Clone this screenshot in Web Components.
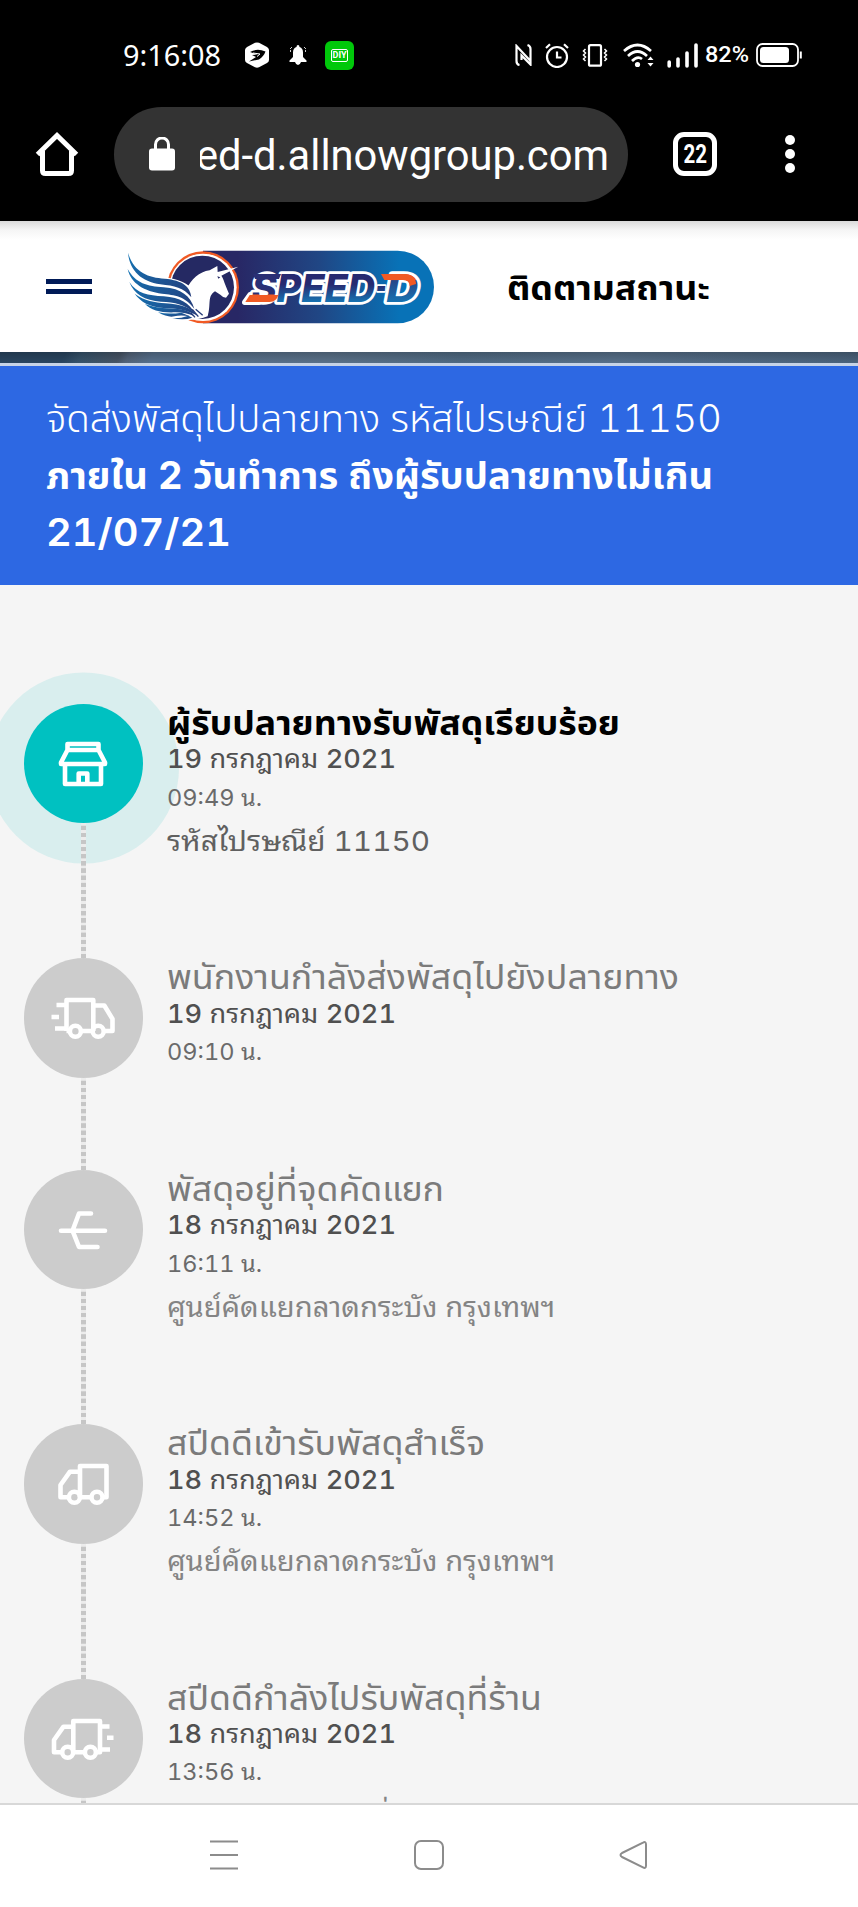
<!DOCTYPE html>
<html lang="th">
<head>
<meta charset="utf-8">
<title>Speed-D</title>
<style>
  html, body { margin: 0; height: 1907px; overflow: hidden; }
  body {
    font-family: Inter, "Noto Sans Thai", "Noto Sans", sans-serif;
    font-variant-numeric: tabular-nums;
    background: #f5f5f5;
  }
</style>
</head>
<body>
<tracking-page></tracking-page>

<script>
class BaseElement extends HTMLElement {
  constructor() {
    super();
    this.attachShadow({ mode: "open" });
  }

  connectedCallback() {
    this.shadowRoot.innerHTML = `<style>${this.constructor.css}</style>${this.render()}`;
    this.rendered?.();
  }
}

// One line of text, squeezed or stretched to a fixed measure
class FitLine extends BaseElement {
  render() {
    return `<span><slot></slot></span>`;
  }

  rendered() {
    const width = Number(this.getAttribute("width"));
    const span = this.shadowRoot.querySelector("span");
    const natural = span.getBoundingClientRect().width;
    if (width && natural) span.style.transform = `scaleX(${width / natural})`;
  }

  static css = `
    :host { display: block; white-space: nowrap; }
    span { display: inline-block; transform-origin: 0 50%; }
  `;
}
customElements.define("fit-line", FitLine);

const statusIcons = {
  app: [24, 26, `<path d="M10 .8Q12 0 14 .8L22 5Q24 6.500 24 8V18Q24 20 22 21L14 25.300Q12 26 10 25.300L2 21Q0 20 0 18V8Q0 6.500 2 5Z" fill="#fff"/><path d="M5 10Q12 6 20.500 9.500Q19 14 14 17.500L4 19.500L11 15L7 13L12.500 12.500Z" fill="#000"/><path d="M8 11L15 12L12 14.500" stroke="#fff" fill="none"/>`],
  bell: [18, 20, `<path d="M9 0Q10.500 0 10.500 2Q14 3 14 7.500V12L17.500 15.500V17H.5V15.500L4 12V7.500Q4 3 7.500 2Q7.500 0 9 0ZM6 17H12Q11 20 9 20T6 17Z" fill="#fff"/><path d="M1 4L3 2M17 4L15 2M1.500 7V5M16.500 7V5" stroke="#ccc"/>`],
  nfc: [17, 22, `<path d="M4.500 21Q1.500 20.500 1.500 17V2L15.500 17M12.500 1Q15.500 2 15.500 5V20.500L6.500 11.500V16" fill="none" stroke="#fff" stroke-width="2.200"/>`],
  alarm: [24, 25, `<circle cx="12" cy="14" r="10" fill="none" stroke="#fff" stroke-width="2.200"/><path d="M12 8.500V14.500H16.500M1 5L5 1.200M23 5L19 1.200" fill="none" stroke="#fff" stroke-width="2.200"/>`],
  vibrate: [26, 23, `<rect x="7" y="1.200" width="12" height="20.500" rx="1.500" fill="none" stroke="#fff" stroke-width="2.200"/><path d="M3.500 5L1.500 7L3.500 9L1.500 11L3.500 13L1.500 15L3.500 17M22.500 5L24.500 7L22.500 9L24.500 11L22.500 13L24.500 15L22.500 17" fill="none" stroke="#fff" stroke-width="1.500"/>`],
  wifi: [32, 25, `<path d="M1 8Q14.500-4 28 8M5 13Q14.500 4 24 13M9 18Q14.500 12.500 19 16" fill="none" stroke="#fff" stroke-width="2.700"/><circle cx="14.500" cy="21.500" r="2.600" fill="#fff"/><path d="M24.500 17L27.500 13.500L30.500 17ZM24.500 20L27.500 23.500L30.500 20Z" fill="#fff"/>`],
  signal: [31, 25, `<path d="M2.200 23V19M11 23V16M20 23V10M29 23V2" stroke="#fff" stroke-width="3.600" stroke-linecap="round"/>`],
  battery: [46, 24, `<rect x="1" y="1" width="41" height="22" rx="5.500" fill="none" stroke="#fff" stroke-width="1.800"/><rect x="4" y="4" width="29" height="16" rx="3.500" fill="#fff"/><path d="M44.800 8.500V15.500" stroke="#fff" stroke-width="2"/>`],
};

class StatusIcon extends BaseElement {
  render() {
    const [w, h, body] = statusIcons[this.getAttribute("name")];
    return `<svg width="${w}" height="${h}" viewBox="0 0 ${w} ${h}">${body}</svg>`;
  }

  static css = `
    :host { display: block; }
    svg { display: block; }
  `;
}
customElements.define("status-icon", StatusIcon);

class StatusBar extends BaseElement {
  render() {
    return `
      <fit-line class="time" width="98">9:16:08</fit-line>
      <status-icon name="app" style="margin-left:23px"></status-icon>
      <status-icon name="bell" style="margin-left:20px"></status-icon>
      <div class="diy"><span>DIY</span></div>
      <status-icon name="nfc" style="margin-left:161px"></status-icon>
      <status-icon name="alarm" style="margin-left:13px"></status-icon>
      <status-icon name="vibrate" style="margin-left:13px"></status-icon>
      <status-icon name="wifi" style="margin-left:15px"></status-icon>
      <status-icon name="signal" style="margin-left:12px"></status-icon>
      <fit-line class="percent" width="44">82%</fit-line>
      <status-icon name="battery" style="margin-left:7px"></status-icon>
    `;
  }

  static css = `
    :host {
      display: flex;
      align-items: center;
      box-sizing: border-box;
      height: 106px;
      padding: 4px 0 0 123px;
      color: #fff;
    }
    .time { width: 99px; font: 29px/34px "Noto Sans"; }
    .percent { width: 44px; margin-left: 7px; font: 500 22px/24px Roboto; }
    .diy {
      display: flex;
      align-items: center;
      justify-content: center;
      width: 29px;
      height: 29px;
      margin-left: 18px;
      border-radius: 6px;
      background: #00c80a;
    }
    .diy span {
      border: 1px solid #fff;
      border-radius: 2px;
      padding: 0 1px;
      font: 700 9px/11px Roboto;
    }
  `;
}
customElements.define("status-bar", StatusBar);

class BrowserBar extends BaseElement {
  render() {
    return `
      <svg class="home" width="44" height="44" viewBox="0 0 44 44">
        <path d="M2.500 22.500L22 3.500L41.500 22.500M7.500 19V38.500Q7.500 41.500 10.500 41.500H33.500Q36.500 41.500 36.500 38.500V19" fill="none" stroke="#fff" stroke-width="5"/>
      </svg>
      <div class="address">
        <svg width="26" height="34" viewBox="0 0 26 34">
          <rect y="11.500" width="26" height="22" rx="3" fill="#fff"/>
          <path d="M6.500 12V7.500A6.500 6.500 0 0 1 19.500 7.500V12" fill="none" stroke="#fff" stroke-width="3"/>
        </svg>
        <div class="url"><fit-line width="413">ed-d.allnowgroup.com</fit-line></div>
      </div>
      <div class="tabs"><span>22</span></div>
      <div class="menu"><i></i><i></i><i></i></div>
    `;
  }

  static css = `
    :host {
      display: flex;
      align-items: center;
      box-sizing: border-box;
      height: 115px;
      padding: 0 0 19px 35px;
      color: #fff;
    }
    .address {
      display: flex;
      align-items: center;
      box-sizing: border-box;
      width: 514px;
      height: 95px;
      margin-left: 35px;
      padding-left: 35px;
      border-radius: 48px;
      background: #333;
    }
    .url {
      display: flex;
      justify-content: flex-end;
      width: 409px;
      margin-left: 25px;
      padding-top: 4px;
      overflow: hidden;
      font: 42px/56px Roboto;
    }
    .url fit-line { width: 413px; flex: none; }
    .tabs {
      display: flex;
      align-items: center;
      justify-content: center;
      box-sizing: border-box;
      width: 44px;
      height: 44px;
      margin-left: 45px;
      border: 5px solid #fff;
      border-radius: 11px;
      font: 700 25px/30px Roboto;
    }
    .tabs span { transform: translateY(1px) scaleX(.82); }
    .menu {
      display: grid;
      gap: 4.300px;
      margin-left: 68px;
    }
    .menu i { width: 10px; height: 10px; border-radius: 50%; background: #fff; }
  `;
}
customElements.define("browser-bar", BrowserBar);

class SpeedLogo extends BaseElement {
  render() {
    return `
      <svg width="312" height="80" viewBox="375 95 936 240">
        <defs>
          <linearGradient id="pill"><stop offset=".15" stop-color="#282765"/><stop offset=".5" stop-color="#204684"/><stop offset=".85" stop-color="#0872b7"/></linearGradient>
          <linearGradient id="word" gradientUnits="userSpaceOnUse" x1="0" y1="170" x2="0" y2="262"><stop offset=".4" stop-color="#272a70"/><stop offset="1" stop-color="#1676b4"/></linearGradient>
          <linearGradient id="first" gradientUnits="userSpaceOnUse" x1="0" y1="170" x2="0" y2="265"><stop offset=".7" stop-color="#2a3075"/><stop offset=".72" stop-color="#f15a24"/></linearGradient>
          <linearGradient id="last" gradientUnits="userSpaceOnUse" x1="0" y1="170" x2="0" y2="265"><stop offset=".25" stop-color="#f15a24"/><stop offset=".27" stop-color="#264789"/><stop offset="1" stop-color="#1676b4"/></linearGradient>
          <linearGradient id="wing" x2="1" y2="1"><stop stop-color="#1475b5"/><stop offset="1" stop-color="#243b79"/></linearGradient>
        </defs>
        <path d="M612 106H1196A109 109 0 0 1 1196 324H612Z" fill="url(#pill)"/>
        <circle cx="612" cy="216" r="108" fill="#f15a24"/>
        <circle cx="612" cy="216" r="101" fill="#fff"/>
        <circle cx="610" cy="216" r="95" fill="#252963"/>
        <path d="M573 310C588 274 573 247 560 226C578 190 600 170 632 165L655 152L656 170L718 154L667 181C674 191 677 206 690 235L681 247Q672 247 664 238L648 228C624 243 637 267 626 303Q596 316 573 310Z" fill="#fff"/>
        <path d="M655 183L664 186L658 190Z" fill="#252963"/>
        <path d="M385 108C382 240 430 292 545 316Q585 314 618 304C604 226 570 190 480 184Q420 160 385 108Z" fill="#fff"/>
        <g fill="url(#wing)">
          <path d="M387 112C405 172 448 187 497 190C552 195 574 214 577 246C553 216 527 212 484 207C427 199 391 165 387 112Z"/>
          <path d="M386 161C410 204 445 213 494 216C547 220 574 242 586 280C557 242 528 239 489 235C436 228 396 205 386 161Z"/>
          <path d="M391 200C414 235 447 240 494 243C545 247 570 263 588 295C559 267 528 260 486 259C437 256 405 236 391 200Z"/>
          <path d="M407 235C437 258 467 260 500 264C547 267 575 277 599 303C562 283 533 279 493 278C452 275 425 260 407 235Z"/>
          <path d="M438 266C476 281 506 277 544 282Q574 286 587 303Q560 291 530 291C488 293 457 286 438 266Z"/>
          <path d="M477 291Q510 298 547 292L573 303Q544 298 526 303T477 291Z"/>
          <path d="M516 308Q540 311 568 301L580 307Q555 316 516 308Z"/>
        </g>
        <path d="M580 282L598 304M575 292L588 306M590 282L611 300" stroke="#243b79" stroke-width="4"/>
        <path d="M737 261L753 238H800L780 261Z" fill="#f15a24" stroke="#fff" stroke-width="16" stroke-linejoin="round"/>
        <g font-family="Inter, sans-serif" font-weight="800" font-style="italic" font-size="116" stroke="#fff" stroke-width="17" stroke-linejoin="round" paint-order="stroke" fill="url(#word)">
          <text x="1162" y="259" textLength="96" lengthAdjust="spacingAndGlyphs" fill="url(#last)">D</text>
          <text x="758" y="259" textLength="370" lengthAdjust="spacingAndGlyphs"><tspan fill="url(#first)">S</tspan>PEED</text>
          <text x="1124" y="255" textLength="44" lengthAdjust="spacingAndGlyphs" stroke-width="10">-</text>
        </g>
        <path d="M739 260L752 239H838Q832 260 812 260Z" fill="#f15a24"/>
        <path d="M762 176H846L840 191H768Z" fill="#2a3075"/>
        <path d="M1146 176H1215Q1250 176 1251 206L1232 212Q1232 194 1212 194H1156Z" fill="#f15a24"/>
      </svg>
    `;
  }

  static css = `
    :host { display: block; }
    svg { display: block; }
  `;
}
customElements.define("speed-logo", SpeedLogo);

class SiteHeader extends BaseElement {
  render() {
    return `
      <div class="burger"><i></i><i></i></div>
      <speed-logo></speed-logo>
      <fit-line width="203"><slot></slot></fit-line>
    `;
  }

  static css = `
    :host {
      display: flex;
      align-items: center;
      height: 131px;
      padding-left: 46px;
      background: linear-gradient(#dadada, #f5f5f5 9px, #fff 19px);
    }
    .burger { display: grid; gap: 5px; width: 46px; }
    .burger i { height: 4.700px; background: #001a57; }
    speed-logo { margin-left: 32px; }
    fit-line {
      margin: 2px 0 0 71px;
      color: #000;
      font-size: 33px;
      font-weight: 700;
      line-height: 44px;
    }
  `;
}
customElements.define("site-header", SiteHeader);

class DeliveryNotice extends BaseElement {
  render() {
    return `<div class="photo"></div><div class="text"><slot></slot></div>`;
  }

  static css = `
    :host { display: block; }
    .photo {
      height: 11px;
      border-bottom: 3px solid #c6d3e6;
      background: linear-gradient(#0003, #0000), linear-gradient(115deg, #294560 0 60px, #36536b 75px, #475566 110px, #53647a 118px, #56708d 140px, #5a7189 300px, #506b83 420px, #57708a 560px, #4a637c 780px, #536c83);
    }
    .text {
      box-sizing: border-box;
      height: 219px;
      padding: 24px 46px 0;
      background: #2d68e3;
      color: #fff;
      font-size: 38px;
      line-height: 57px;
    }
  `;
}
customElements.define("delivery-notice", DeliveryNotice);

const wheels = (a, b) => `<circle cx="${a}" cy="13.300" r="5.500"/><circle cx="${b}" cy="13.300" r="5.500"/>`;
const stepIcons = {
  store: `<path d="M-15.500-14V-20H15.500V-14M-15.500-14H15.500L22-1.500V0H-22V-1.500ZM-18 0V20H18V0M-4.300 20V9.500H4.300V20"/>`,
  deliver: `<path d="M-16.500 13V-18H10.300V13M-16.500 13H-13M-2 13H10M10.300-12.500H21.300L29.500 1V13H21M-26.500-13H-17M-31.500-1H-24M-28 10.500H-17"/>${wheels(-7.6, 15.2)}`,
  sort: `<path d="M-22 .7H22M-10.500 .7L-4-16.500H8M-10.500 .7L-4 17H14.500" stroke-linecap="round"/>`,
  truck: `<path d="M-3 13V-18H23.500V13.300H20M-3-12.300H-13L-22.500 1V13.300H-14M-3 13.300H9"/>${wheels(-8.6, 14)}`,
  pickup: `<path d="M-9.700 13V-18H17V13.300H13M-9.700-12.300H-19.500L-29 1V13.300H-21M-9.700 13.300H2M17-12.500H26.500M24-1.200H30.500M17 10.500H27"/>${wheels(-15.3, 7.4)}`,
};

class TrackingStep extends BaseElement {
  render() {
    return `
      <div class="rail">
        <div class="dot">
          <svg width="72" height="72" viewBox="-36 -36 72 72" fill="none" stroke="#fff" stroke-width="4.600" stroke-linejoin="round">
            ${stepIcons[this.getAttribute("icon")]}
          </svg>
        </div>
        <div class="line"></div>
      </div>
      <div class="info">
        <slot name="title"></slot>
        <slot name="date"></slot>
        <slot name="time"></slot>
        <slot name="place"></slot>
      </div>
    `;
  }

  static css = `
    :host { display: flex; flex: none; height: 254.400px; }
    :host([short]) { height: 211.700px; }
    .rail {
      display: flex;
      flex-direction: column;
      align-items: center;
      width: 119.400px;
    }
    .dot {
      display: flex;
      align-items: center;
      justify-content: center;
      flex: none;
      width: 119.400px;
      height: 119.400px;
      border-radius: 50%;
      background: #ccc;
    }
    :host([active]) .dot { background: #00c1c1; box-shadow: 0 4.500px 0 36px #d9eeee; }
    .line {
      flex: 1;
      width: 5px;
      background: repeating-linear-gradient(#ececec 0 2.400px, #c6c6c6 2.800px 6.700px, #ececec 7.130px);
    }
    .info { margin-left: 24px; z-index: 1; }
    ::slotted(*) { display: block; }
    ::slotted([slot=title]) { height: 40px; margin-top: -1.200px; color: #7b7b7b; font-size: 34px; line-height: 40px; }
    :host([active]) ::slotted([slot=title]) { color: #000; font-weight: 700; }
    ::slotted([slot=date]) { height: 30px; margin-top: 1.400px; color: #505050; font-size: 26px; line-height: 30px; font-family: Inter, "Noto Sans Thai Looped", Loma, Garuda, "Noto Sans Thai"; }
    ::slotted([slot=time]) { height: 34px; margin-top: 6.300px; color: #6a6a6a; font: 23px/34px Inter, "Noto Sans Thai Looped", Loma, Garuda, "Noto Sans Thai"; }
    ::slotted([slot=place]) { height: 40px; margin-top: 6.200px; color: #848484; font: 27.500px/40px Inter, "Noto Sans Thai Looped", Loma, Garuda, "Noto Sans Thai"; }
    ::slotted([slot=time]), ::slotted([slot=place]) { font-variant-numeric: tabular-nums; }
    :host([active]) ::slotted([slot=place]) { color: #606060; }
  `;
}
customElements.define("tracking-step", TrackingStep);

class PhoneNav extends BaseElement {
  render() {
    return `
      <svg width="30" height="30" viewBox="0 0 30 30"><path d="M1 1.500H29M1 15H29M1 28.500H29"/></svg>
      <svg width="30" height="30" viewBox="0 0 30 30"><rect x="1" y="1" width="28" height="28" rx="6"/></svg>
      <svg width="30" height="30" viewBox="0 0 30 30"><path d="M24 2.600Q27 1 27 4.500V25.500Q27 29 24 27.400L3 17Q0 15 3 13Z"/></svg>
    `;
  }

  static css = `
    :host {
      display: flex;
      justify-content: center;
      align-items: center;
      gap: 175px;
      box-sizing: border-box;
      height: 104px;
      padding-bottom: 3px;
      border-top: 2px solid #d8d8d8;
      background: #fff;
    }
    svg { fill: none; stroke: #8c8c8c; stroke-width: 2; stroke-linejoin: round; }
  `;
}
customElements.define("phone-nav", PhoneNav);

class TrackingPage extends BaseElement {
  render() {
    return `
      <div class="chrome">
        <status-bar></status-bar>
        <browser-bar></browser-bar>
      </div>
      <site-header>ติดตามสถานะ</site-header>
      <delivery-notice>
        <fit-line width="676" class="light">จัดส่งพัสดุไปปลายทาง รหัสไปรษณีย์ 11150</fit-line>
        <fit-line width="667"><b>ภายใน 2 วันทำการ ถึงผู้รับปลายทางไม่เกิน</b></fit-line>
        <fit-line width="185" class="medium">21/07/21</fit-line>
      </delivery-notice>
      <main>
        <tracking-step icon="store" active>
          <fit-line slot="title" width="453">ผู้รับปลายทางรับพัสดุเรียบร้อย</fit-line>
          <fit-line slot="date" width="229"><b>19</b> กรกฎาคม <b>2021</b></fit-line>
          <fit-line slot="time" width="95">09:49 น.</fit-line>
          <fit-line slot="place" width="263">รหัสไปรษณีย์ 11150</fit-line>
        </tracking-step>
        <tracking-step icon="deliver" short>
          <fit-line slot="title" width="512">พนักงานกำลังส่งพัสดุไปยังปลายทาง</fit-line>
          <fit-line slot="date" width="229"><b>19</b> กรกฎาคม <b>2021</b></fit-line>
          <fit-line slot="time" width="95">09:10 น.</fit-line>
        </tracking-step>
        <tracking-step icon="sort">
          <fit-line slot="title" width="277">พัสดุอยู่ที่จุดคัดแยก</fit-line>
          <fit-line slot="date" width="229"><b>18</b> กรกฎาคม <b>2021</b></fit-line>
          <fit-line slot="time" width="95">16:11 น.</fit-line>
          <fit-line slot="place" width="388">ศูนย์คัดแยกลาดกระบัง กรุงเทพฯ</fit-line>
        </tracking-step>
        <tracking-step icon="truck">
          <fit-line slot="title" width="318">สปีดดีเข้ารับพัสดุสำเร็จ</fit-line>
          <fit-line slot="date" width="229"><b>18</b> กรกฎาคม <b>2021</b></fit-line>
          <fit-line slot="time" width="95">14:52 น.</fit-line>
          <fit-line slot="place" width="388">ศูนย์คัดแยกลาดกระบัง กรุงเทพฯ</fit-line>
        </tracking-step>
        <tracking-step icon="pickup">
          <fit-line slot="title" width="375">สปีดดีกำลังไปรับพัสดุที่ร้าน</fit-line>
          <fit-line slot="date" width="229"><b>18</b> กรกฎาคม <b>2021</b></fit-line>
          <fit-line slot="time" width="95">13:56 น.</fit-line>
          <fit-line slot="place" style="padding-left:204px">ที่</fit-line>
        </tracking-step>
      </main>
      <phone-nav></phone-nav>
    `;
  }

  static css = `
    :host { display: flex; flex-direction: column; width: 858px; height: 1907px; }
    :host > * { flex: none; }
    .chrome { height: 221px; background: #000; }
    .light { font-weight: 360; }
    .medium { font-weight: 600; }
    tracking-step b { font-weight: 500; }
    main {
      display: flex;
      flex-direction: column;
      box-sizing: border-box;
      height: 1218px;
      padding: 119px 0 0 23.800px;
      overflow: hidden;
      background: #f5f5f5;
    }
  `;
}
customElements.define("tracking-page", TrackingPage);
</script>
</body>
</html>
